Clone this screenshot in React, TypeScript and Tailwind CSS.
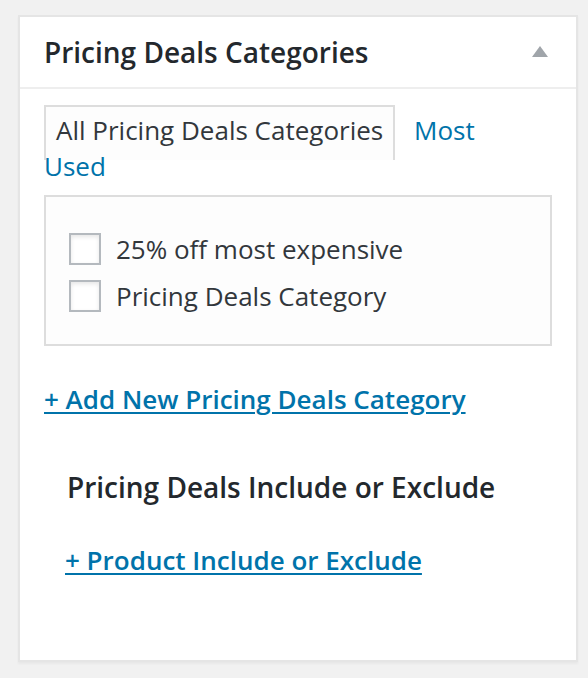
const categories = ['25% off most expensive', 'Pricing Deals Category'];

const App = () => {
  return (
    <div className="min-h-screen bg-[#f1f1f1] pt-[15px] pl-[18px] font-['Open_Sans',sans-serif]">
      <div className="w-[560px] h-[647px] border-2 border-[#e5e5e5] bg-white shadow-[0_2px_2px_rgba(0,0,0,0.04)]">
        {/* metabox header */}
        <div className="h-[72px] flex items-center justify-between pl-[24px] pr-[28px] border-b-2 border-[#eeeeee]">
          <h2 className="text-[28px] leading-[39px] font-semibold text-[#23282d]">Pricing Deals Categories</h2>
          <svg width="16" height="11" viewBox="0 0 16 11" className="mb-[1px]">
            <polygon points="8,0 16,11 0,11" fill="#a0a5aa" />
          </svg>
        </div>

        <div className="px-[24px] pt-[23px]">
          {/* tabs */}
          <p className="text-[26px] leading-[36px]">
            <span className="border-x-2 border-t-2 border-[#dddddd] bg-[#fdfdfd] pt-[5px] px-[10px] pb-[12px] text-[#32373c]">
              All Pricing Deals Categories
            </span>{' '}
            <span className="pl-[12px] text-[#0073aa]">
              Most
              <br />
              Used
            </span>
          </p>

          {/* checklist panel */}
          <div className="mt-[11px] h-[151px] border-2 border-[#dddddd] bg-[#fdfdfd] px-[23px] pt-[28px]">
            {categories.map((name) => (
              <label key={name} className="h-[47.5px] flex items-center">
                <span className="w-[32px] h-[32px] shrink-0 border-2 border-[#b4b9be] bg-white shadow-[inset_0_2px_4px_rgba(0,0,0,0.1)]" />
                <span className="ml-[15px] text-[26px] leading-[36px] text-[#32373c]">{name}</span>
              </label>
            ))}
          </div>

          <div className="mt-[35px] text-[26px] leading-[36px] font-semibold">
            <a href="#" className="text-[#0073aa] underline decoration-2 underline-offset-[3px]">
              + Add New Pricing Deals Category
            </a>
          </div>

          <h3 className="mt-[51px] ml-[23px] text-[28px] leading-[39px] font-semibold text-[#23282d]">
            Pricing Deals Include or Exclude
          </h3>

          <div className="mt-[35px] ml-[21px] text-[26px] leading-[36px] font-semibold">
            <a href="#" className="text-[#0073aa] underline decoration-2 underline-offset-[3px]">
              + Product Include or Exclude
            </a>
          </div>
        </div>
      </div>
    </div>
  );
};

export default App;
